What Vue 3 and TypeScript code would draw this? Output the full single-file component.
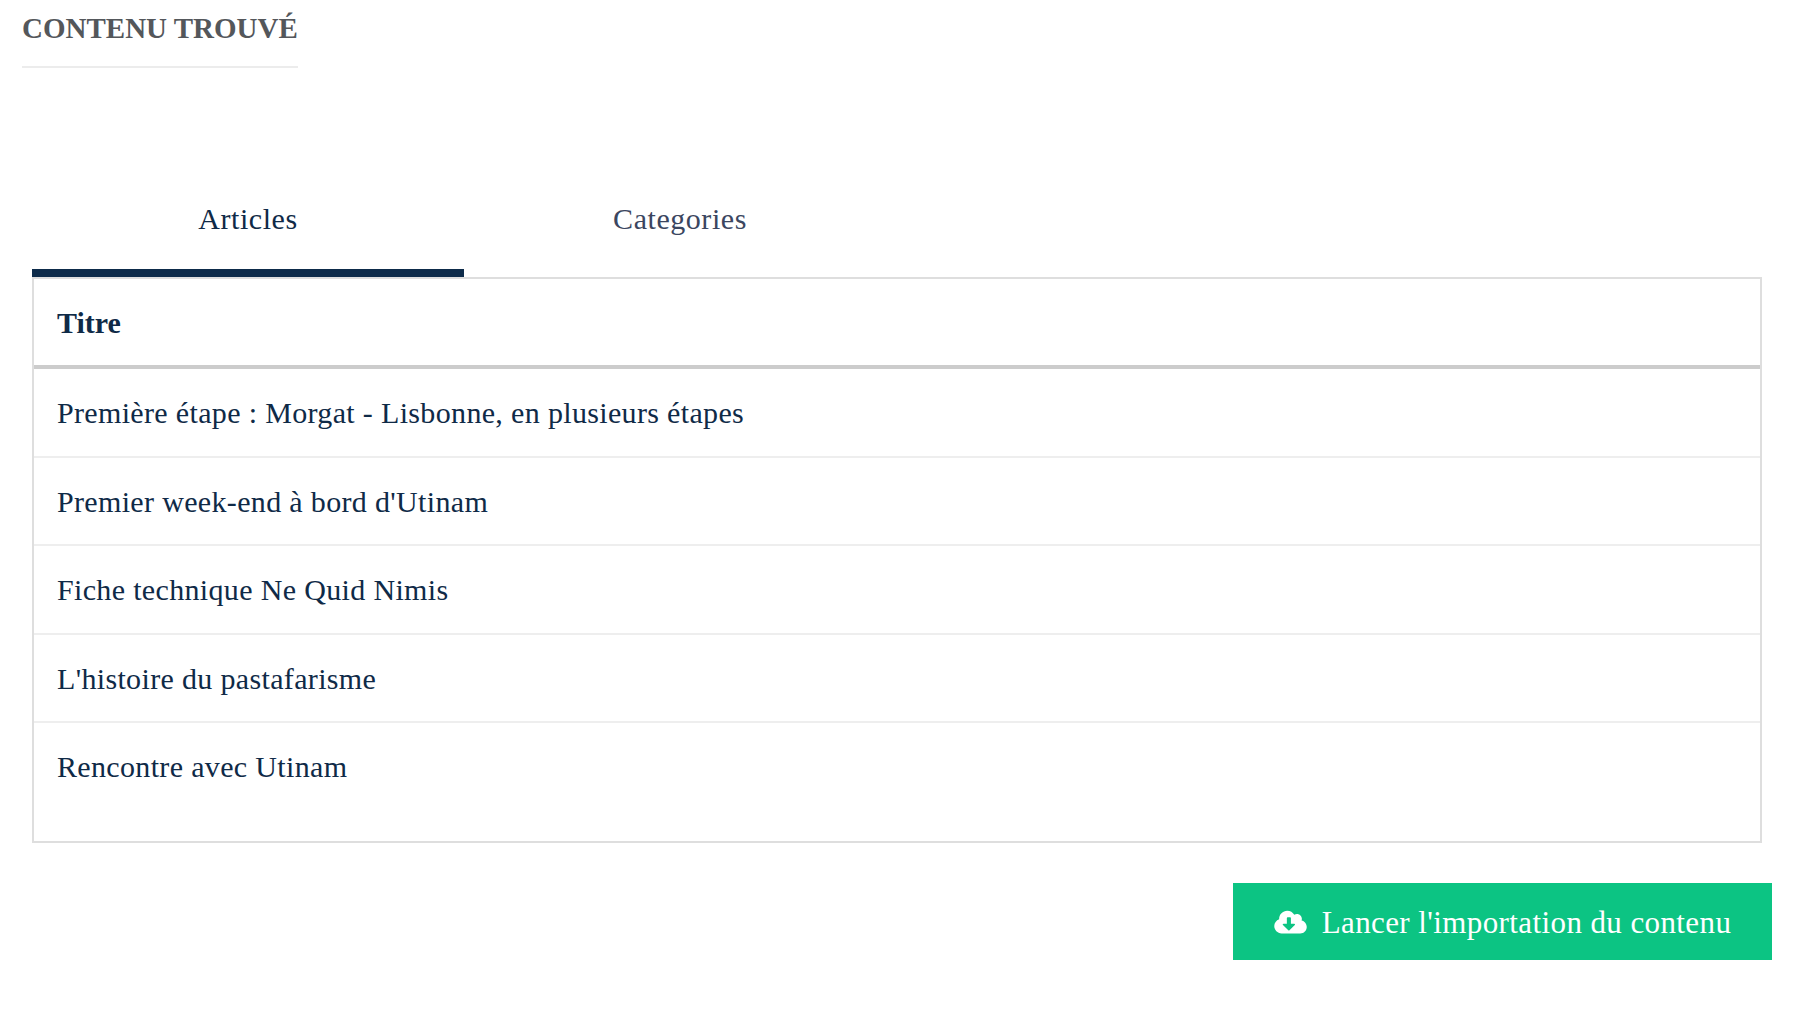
<script setup lang="ts">
const rows: string[] = [
  'Première étape : Morgat - Lisbonne, en plusieurs étapes',
  "Premier week-end à bord d'Utinam",
  'Fiche technique Ne Quid Nimis',
  "L'histoire du pastafarisme",
  'Rencontre avec Utinam',
]
</script>

<template>
  <div class="page">
    <h2 class="heading">CONTENU TROUVÉ</h2>
    <div class="tabs">
      <div class="tab active">Articles</div>
      <div class="tab">Categories</div>
    </div>
    <div class="table">
      <div class="head">Titre</div>
      <div v-for="r in rows" :key="r" class="row">{{ r }}</div>
    </div>
    <div class="actions">
      <button class="btn">
        <svg width="33" height="26" viewBox="0 0 640 512" fill="#fff"><path d="M537.6 226.6c4.1-10.7 6.4-22.4 6.4-34.6 0-53-43-96-96-96-19.7 0-38.1 6-53.3 16.2C367 64.2 315.3 32 256 32c-88.4 0-160 71.6-160 160 0 2.7.1 5.4.2 8.1C40.2 219.8 0 273.2 0 336c0 79.5 64.5 144 144 144h368c70.7 0 128-57.3 128-128 0-61.9-44-113.6-102.4-125.4zm-132.9 88.7L299.3 420.7c-6.2 6.2-16.4 6.2-22.6 0L171.3 315.3c-10.1-10.1-2.9-27.3 11.3-27.3H248V176c0-8.8 7.2-16 16-16h48c8.8 0 16 7.2 16 16v112h65.4c14.2 0 21.4 17.2 11.3 27.3z"/></svg>
        <span class="label">Lancer l'importation du contenu</span>
      </button>
    </div>
  </div>
</template>

<style scoped>
.page { width: 1798px; height: 1010px; position: relative; overflow: hidden; background: #fff; font-family: "Liberation Serif", serif; color: #0f2a47; }
.heading { display: inline-block; margin: 0 0 0 22px; padding: 11px 0 21px; font-size: 29px; line-height: 34px; font-weight: 700; color: #54575b; border-bottom: 2px solid #ececec; }
.tabs { display: flex; margin: 117px 0 0 32px; }
.tab { width: 432px; height: 92px; padding-bottom: 16px; display: flex; align-items: center; justify-content: center; font-size: 30px; letter-spacing: 0.55px; color: #3b4660; box-sizing: border-box; border-bottom: 8px solid transparent; }
.tab.active { color: #0f2a47; border-bottom-color: #0d2b4a; }
.table { margin: 0 36px 0 32px; border: 2px solid #dedede; height: 566px; box-sizing: border-box; }
.head { height: 90px; padding-top: 2px; display: flex; align-items: center; padding-left: 23px; font-size: 30px; font-weight: 700; border-bottom: 4px solid #ccc; box-sizing: border-box; }
.row { height: 88.5px; padding-top: 2px; display: flex; align-items: center; padding-left: 23px; font-size: 30px; letter-spacing: 0.34px; border-bottom: 2px solid #eee; box-sizing: border-box; }
.row:last-child { border-bottom-color: transparent; }
.actions { display: flex; justify-content: flex-end; margin: 40px 26px 0 0; }
.btn { width: 539px; height: 77px; background: #0cc483; color: #fff; border: 0; padding: 0; display: flex; align-items: center; justify-content: center; gap: 15px; font: 31px "Liberation Serif", serif; letter-spacing: 0.4px; }
.label { padding-top: 2px; }
</style>
